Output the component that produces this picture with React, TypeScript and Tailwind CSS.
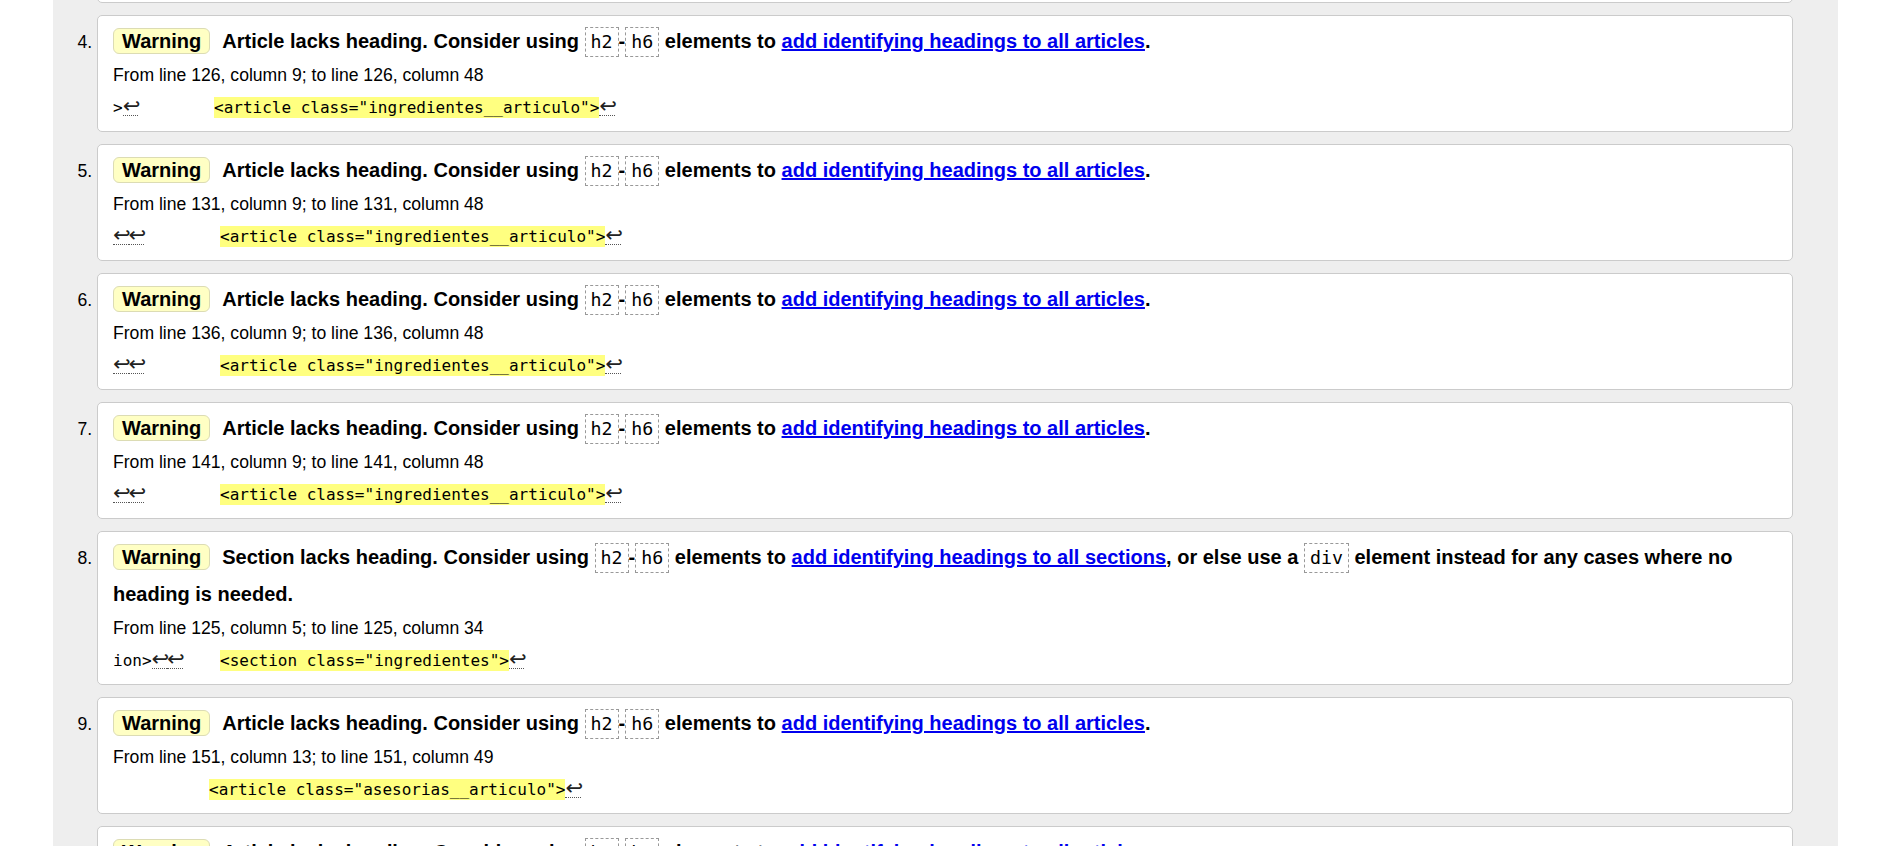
import React from 'react';

type Item = {
  n: number;
  kind: 'article' | 'section';
  from: string;
  prefix: string;
  breaks: number;
  pad: number;
  code: string;
};

const items: Item[] = [
  { n: 3, kind: 'article', from: 'From line 121, column 9; to line 121, column 48', prefix: '', breaks: 2, pad: 107, code: '<article class="ingredientes__articulo">' },
  { n: 4, kind: 'article', from: 'From line 126, column 9; to line 126, column 48', prefix: '>', breaks: 1, pad: 101, code: '<article class="ingredientes__articulo">' },
  { n: 5, kind: 'article', from: 'From line 131, column 9; to line 131, column 48', prefix: '', breaks: 2, pad: 107, code: '<article class="ingredientes__articulo">' },
  { n: 6, kind: 'article', from: 'From line 136, column 9; to line 136, column 48', prefix: '', breaks: 2, pad: 107, code: '<article class="ingredientes__articulo">' },
  { n: 7, kind: 'article', from: 'From line 141, column 9; to line 141, column 48', prefix: '', breaks: 2, pad: 107, code: '<article class="ingredientes__articulo">' },
  { n: 8, kind: 'section', from: 'From line 125, column 5; to line 125, column 34', prefix: 'ion>', breaks: 2, pad: 107, code: '<section class="ingredientes">' },
  { n: 9, kind: 'article', from: 'From line 151, column 13; to line 151, column 49', prefix: '', breaks: 0, pad: 96, code: '<article class="asesorias__articulo">' },
  { n: 10, kind: 'article', from: 'From line 156, column 13; to line 156, column 49', prefix: '', breaks: 0, pad: 96, code: '<article class="asesorias__articulo">' },
];

// line feed marker, like the checker's ↩ with a dotted underline
function Lf() {
  return (
    <span className="inline-block w-[15.5px] text-center font-['DejaVu_Sans',sans-serif] text-[21px] leading-[18px] text-[#222] border-b border-dotted border-[#555]">
      ↩
    </span>
  );
}

function Code({ children }: { children: React.ReactNode }) {
  return (
    <code className="inline-block border border-dashed border-[#999] px-[5px] leading-[28px] font-['DejaVu_Sans_Mono',monospace] text-[18.3px] font-normal">
      {children}
    </code>
  );
}

function Heading({ kind }: { kind: Item['kind'] }) {
  return (
    <p className="font-bold text-[20px] leading-[37px]">
      <strong className="inline-block mr-[12px] px-[8px] leading-[24px] rounded-[6px] border border-[#dcdcb4] bg-[#ffffc4]">
        Warning
      </strong>
      {kind === 'article' ? 'Article' : 'Section'}
      {' lacks heading. Consider using '}
      <Code>h2</Code>-<Code>h6</Code>
      {' elements to '}
      <a href="#" className="text-[#0000ee] underline">
        {kind === 'article' ? 'add identifying headings to all articles' : 'add identifying headings to all sections'}
      </a>
      {kind === 'article' ? (
        '.'
      ) : (
        <>
          {', or else use a '}
          <Code>div</Code>
          {' element instead for any cases where no heading is needed.'}
        </>
      )}
    </p>
  );
}

function Warning({ item }: { item: Item }) {
  return (
    <li className="mb-[12px] bg-white border border-[#cbcbcb] rounded-[5px] pt-[7px] pb-[5px] px-[15px]">
      <Heading kind={item.kind} />
      <p className="leading-[30px]">{item.from}</p>
      <p className="leading-[36px] whitespace-pre font-['DejaVu_Sans_Mono',monospace] text-[16px] text-black">
        <span className="inline-block" style={{ width: item.pad }}>
          {item.prefix}
          {Array.from({ length: item.breaks }).map((_, i) => (
            <Lf key={i} />
          ))}
        </span>
        <mark className="bg-[#ffff80] text-black py-[1px]">{item.code}</mark>
        <Lf />
      </p>
    </li>
  );
}

export default function App() {
  return (
    <div className="h-screen overflow-hidden bg-white text-black font-['Liberation_Sans',Arial,Helvetica,sans-serif]">
      <div className="flow-root ml-[53px] w-[1785px] h-full bg-[#eeeeee] pl-[44px] pr-[45px]">
        <ol start={3} className="list-decimal list-outside -mt-[114px] text-[17.6px]">
          {items.map((item) => (
            <Warning key={item.n} item={item} />
          ))}
        </ol>
      </div>
    </div>
  );
}
